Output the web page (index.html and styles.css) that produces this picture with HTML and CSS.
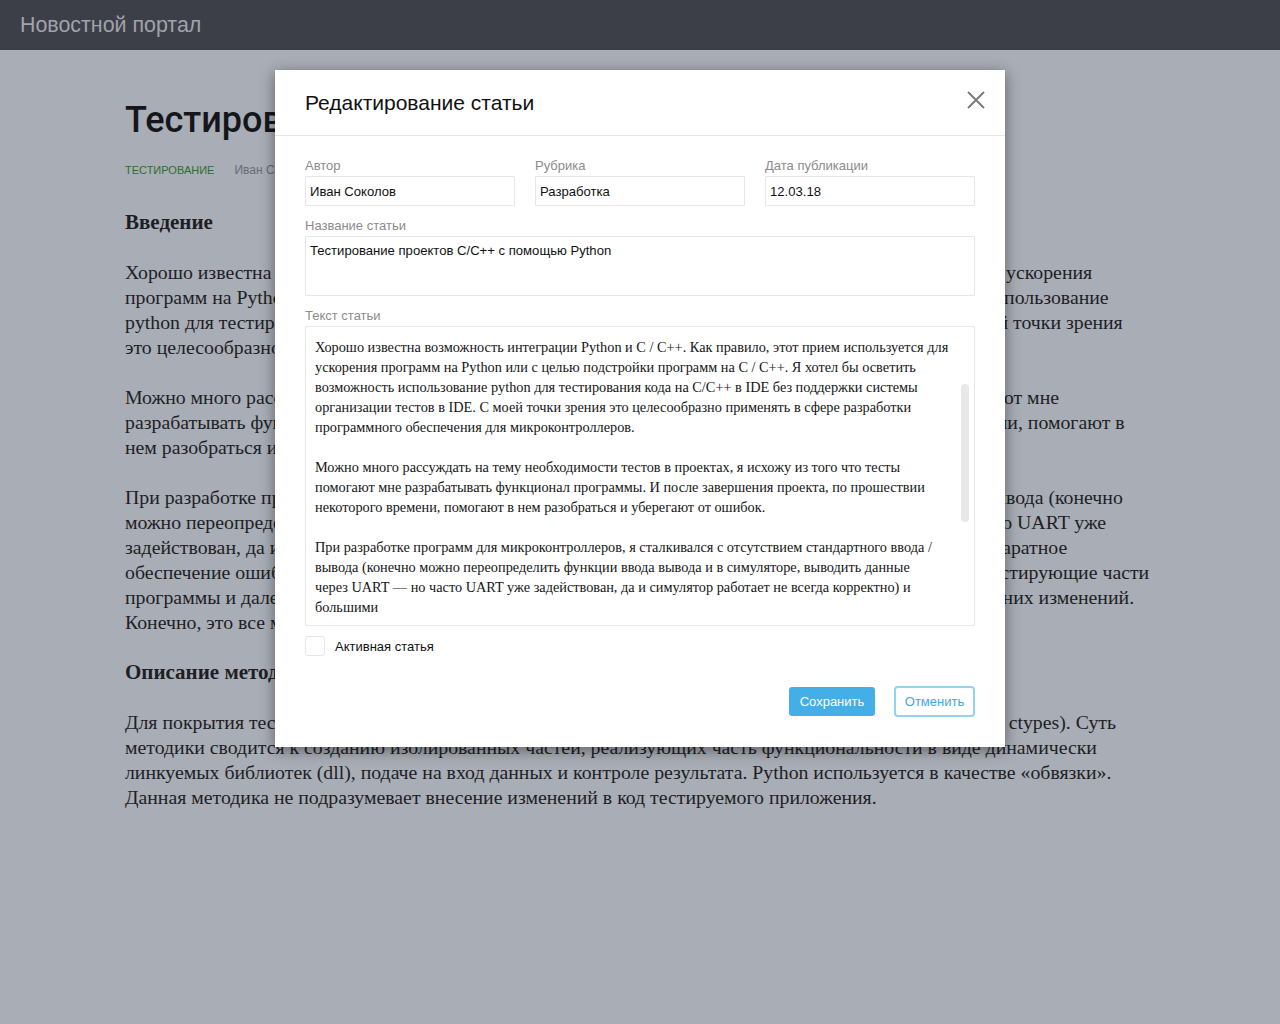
FILE: index.html
```html
<!DOCTYPE html>
<html lang="ru">
<head>
<meta charset="utf-8">
<title>Новостной портал</title>
<link rel="stylesheet" href="styles.css">
</head>
<body>
<header class="topbar"><span class="brand">Новостной портал</span></header>

<main class="article">
  <h1 class="article-title">Тестирование проектов C/C++ с помощью Python</h1>
  <div class="meta"><span class="rubric">Тестирование</span><span class="author">Иван Соколов</span></div>

  <h2 class="section-title">Введение</h2>
  <p class="text">Хорошо известна возможность интеграции Python и C / C++. Как правило, этот прием используется для ускорения<br>программ на Python или с целью подстройки программ на C / C++. Я хотел бы осветить возможность использование<br>python для тестирования кода на C/C++ в IDE без поддержки системы организации тестов в IDE. С моей точки зрения<br>это целесообразно применять в сфере разработки программного обеспечения для микроконтроллеров.</p>
  <p class="text">Можно много рассуждать на тему необходимости тестов в проектах, я исхожу из того что тесты помогают мне<br>разрабатывать функционал программы. И после завершения проекта, по прошествии некоторого времени, помогают в<br>нем разобраться и уберегают от ошибок.</p>
  <p class="text">При разработке программ для микроконтроллеров, я сталкивался с отсутствием стандартного ввода / вывода (конечно<br>можно переопределить функции ввода вывода и в симуляторе, выводить данные через UART — но часто UART уже<br>задействован, да и симулятор работает не всегда корректно) и большими затратами на отладку, ведь аппаратное<br>обеспечение ошибками прошивки не прощает. Поэтому я стараюсь выносить в отдельные файлы все тестирующие части<br>программы и далее проверять их отдельно на персональном компьютере, без отладчика, без внесения в них изменений.<br>Конечно, это все можно сделать и другими способами.</p>

  <h2 class="section-title">Описание методики</h2>
  <p class="text">Для покрытия тестами кода на языке C используется язык Python и его стандартные библиотеки (только ctypes). Суть<br>методики сводится к созданию изолированных частей, реализующих часть функциональности в виде динамически<br>линкуемых библиотек (dll), подаче на вход данных и контроле результата. Python используется в качестве «обвязки».<br>Данная методика не подразумевает внесение изменений в код тестируемого приложения.</p>
</main>

<div class="modal" role="dialog" aria-labelledby="modal-title">
  <div class="modal-header">
    <h3 class="modal-title" id="modal-title">Редактирование статьи</h3>
    <button class="close-btn" type="button" aria-label="Закрыть">
      <svg width="18" height="18" viewBox="0 0 18 18"><path d="M1 1 L17 17 M17 1 L1 17" stroke="#7b7b7b" stroke-width="2" fill="none"/></svg>
    </button>
  </div>
  <form class="modal-body">
    <div class="row-3">
      <label class="field"><span class="field-label">Автор</span><input class="input" type="text" value="Иван Соколов"></label>
      <label class="field"><span class="field-label">Рубрика</span><input class="input" type="text" value="Разработка"></label>
      <label class="field"><span class="field-label">Дата публикации</span><input class="input" type="text" value="12.03.18"></label>
    </div>
    <label class="field spaced"><span class="field-label">Название статьи</span><textarea class="input title-area">Тестирование проектов C/C++ с помощью Python</textarea></label>
    <div class="field spaced"><label class="field-label" for="body-text">Текст статьи</label><div class="text-wrap"><textarea id="body-text" class="input body-area" wrap="off">Хорошо известна возможность интеграции Python и C / C++. Как правило, этот прием используется для
ускорения программ на Python или с целью подстройки программ на C / C++. Я хотел бы осветить
возможность использование python для тестирования кода на C/C++ в IDE без поддержки системы
организации тестов в IDE. С моей точки зрения это целесообразно применять в сфере разработки
программного обеспечения для микроконтроллеров.

Можно много рассуждать на тему необходимости тестов в проектах, я исхожу из того что тесты
помогают мне разрабатывать функционал программы. И после завершения проекта, по прошествии
некоторого времени, помогают в нем разобраться и уберегают от ошибок.

При разработке программ для микроконтроллеров, я сталкивался с отсутствием стандартного ввода /
вывода (конечно можно переопределить функции ввода вывода и в симуляторе, выводить данные
через UART — но часто UART уже задействован, да и симулятор работает не всегда корректно) и
большими</textarea><span class="scroll-thumb"></span></div></div>
    <label class="check-row"><input class="checkbox" type="checkbox"><span>Активная статья</span></label>
    <div class="actions">
      <button class="btn btn-primary" type="button">Сохранить</button>
      <button class="btn btn-outline" type="button">Отменить</button>
    </div>
  </form>
</div>
</body>
</html>
```

FILE: styles.css
```css
html, body {
  margin: 0;
  padding: 0;
}

body {
  background: #a9adb6;
  font-family: "Liberation Sans", Arial, sans-serif;
  min-height: 1024px;
}

.topbar {
  height: 50px;
  background: #3c3f48;
  display: flex;
  align-items: center;
  padding-left: 20px;
}

.brand {
  color: #a0a3a9;
  font-size: 21.4px;
}

.article {
  width: 1030px;
  margin: 0 auto;
  padding-top: 50px;
  color: #1d1f24;
}

.article-title {
  margin: 0;
  font: 500 36px/40px Roboto, "Liberation Sans", Arial, sans-serif;
  color: #14161b;
  white-space: nowrap;
}

.meta {
  margin-top: 20px;
  display: flex;
  gap: 20px;
  font-size: 11px;
  line-height: 20px;
}

.rubric {
  color: #2c6e2e;
  text-transform: uppercase;
}

.author {
  color: #696c73;
  font-size: 12px;
}

.section-title {
  margin: 30px 0 0;
  font: bold 21px/25px "Liberation Serif", "Times New Roman", serif;
}

.text {
  margin: 25px 0 0;
  font: 19.8px/25px "Liberation Serif", "Times New Roman", serif;
  white-space: nowrap;
}

.text + .section-title {
  margin-top: 25px;
}

/* Modal */
.modal {
  position: absolute;
  top: 70px;
  left: 50%;
  width: 730px;
  margin-left: -365px;
  background: #fff;
  box-shadow: 0 3px 14px rgba(0, 0, 0, 0.45);
}

.modal-header {
  height: 66px;
  box-sizing: border-box;
  padding: 0 20px 0 30px;
  border-bottom: 1px solid #e6e6e6;
  display: flex;
  align-items: center;
  justify-content: space-between;
}

.modal-title {
  margin: 0;
  font-weight: normal;
  font-size: 21px;
  color: #111;
}

.close-btn {
  border: 0;
  background: none;
  padding: 0;
  width: 18px;
  height: 18px;
  display: flex;
  margin-top: -6px;
}

.modal-body {
  margin: 0;
  padding: 20px 30px 30px;
  display: flex;
  flex-direction: column;
}

.row-3 {
  display: grid;
  grid-template-columns: repeat(3, 1fr);
  gap: 20px;
}

.field {
  display: flex;
  flex-direction: column;
}

.field.spaced {
  margin-top: 10px;
}

.field-label {
  font-size: 13px;
  line-height: 20px;
  color: #8b8b8b;
}

.input {
  box-sizing: border-box;
  border: 1px solid #e6e6e6;
  border-radius: 1px;
  font-family: "Liberation Sans", Arial, sans-serif;
  font-size: 13.1px;
  color: #111;
  outline: none;
  background: #fff;
  margin: 0;
}

input.input {
  height: 30px;
  padding: 0 4px;
}

.title-area {
  height: 60px;
  padding: 5px 4px;
  resize: none;
  line-height: 18px;
}

.text-wrap {
  position: relative;
}

.body-area {
  display: block;
  width: 100%;
  height: 300px;
  padding: 10px 9px;
  resize: none;
  overflow: hidden;
  white-space: pre;
  font: 14.3px/20px "Liberation Serif", "Times New Roman", serif;
  color: #151515;
}

.scroll-thumb {
  position: absolute;
  right: 6px;
  top: 58px;
  width: 8px;
  height: 138px;
  border-radius: 4px;
  background: #e8e8e8;
}

.check-row {
  margin-top: 10px;
  display: flex;
  align-items: center;
  gap: 10px;
  font-size: 13px;
  color: #111;
  height: 20px;
}

.checkbox {
  appearance: none;
  -webkit-appearance: none;
  margin: 0;
  width: 20px;
  height: 20px;
  box-sizing: border-box;
  border: 1px solid #e6e6e6;
  border-radius: 3px;
  background: #fff;
}

.actions {
  margin-top: 30px;
  display: flex;
  justify-content: flex-end;
  align-items: center;
  gap: 19px;
}

.btn {
  font-family: "Liberation Sans", Arial, sans-serif;
  font-size: 13px;
  box-sizing: border-box;
  border-radius: 3px;
  cursor: pointer;
}

.btn-primary {
  width: 86px;
  height: 29px;
  border: 0;
  background: #43aee7;
  color: #fff;
}

.btn-outline {
  width: 81px;
  height: 31px;
  border: 2px solid #93d2f2;
  border-radius: 4px;
  background: #fff;
  color: #3ea9e1;
}
```
